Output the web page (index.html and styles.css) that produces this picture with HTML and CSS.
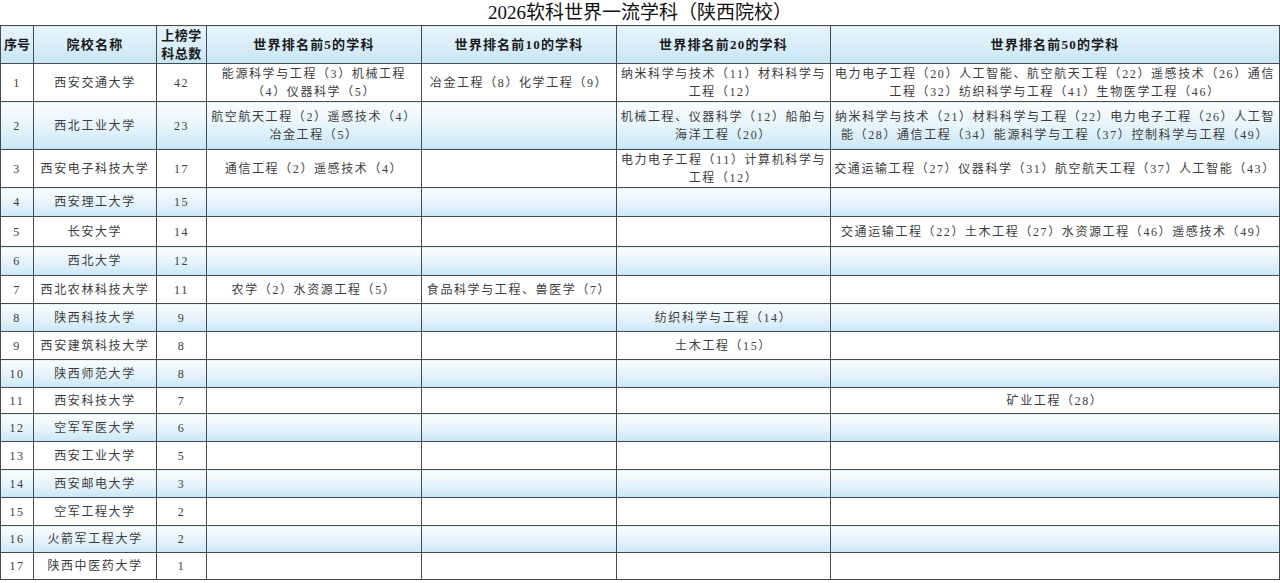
FILE: index.html
```html
<!DOCTYPE html>
<html lang="zh-CN">
<head>
<meta charset="utf-8">
<title>2026软科世界一流学科（陕西院校）</title>
<link rel="stylesheet" href="styles.css">
</head>
<body>
<div class="title">2026软科世界一流学科（陕西院校）</div>
<table class="rank">
  <colgroup>
    <col class="c-no"><col class="c-name"><col class="c-total"><col class="c-5"><col class="c-10"><col class="c-20"><col class="c-50">
  </colgroup>
  <thead>
    <tr class="h-head">
      <th class="th-no">序号</th>
      <th>院校名称</th>
      <th class="th-total">上榜学<br>科总数</th>
      <th>世界排名前5的学科</th>
      <th>世界排名前10的学科</th>
      <th>世界排名前20的学科</th>
      <th>世界排名前50的学科</th>
    </tr>
  </thead>
  <tbody>
    <tr class="h38">
      <td>1</td><td>西安交通大学</td><td>42</td>
      <td>能源科学与工程（3）机械工程<br>（4）仪器科学（5）</td>
      <td>冶金工程（8）化学工程（9）</td>
      <td>纳米科学与技术（11）材料科学与<br>工程（12）</td>
      <td>电力电子工程（20）人工智能、航空航天工程（22）遥感技术（26）通信<br>工程（32）纺织科学与工程（41）生物医学工程（46）</td>
    </tr>
    <tr class="alt h48">
      <td>2</td><td>西北工业大学</td><td>23</td>
      <td>航空航天工程（2）遥感技术（4）<br>冶金工程（5）</td>
      <td></td>
      <td>机械工程、仪器科学（12）船舶与<br>海洋工程（20）</td>
      <td>纳米科学与技术（21）材料科学与工程（22）电力电子工程（26）人工智<br>能（28）通信工程（34）能源科学与工程（37）控制科学与工程（49）</td>
    </tr>
    <tr class="h38">
      <td>3</td><td>西安电子科技大学</td><td>17</td>
      <td>通信工程（2）遥感技术（4）</td>
      <td></td>
      <td>电力电子工程（11）计算机科学与<br>工程（12）</td>
      <td>交通运输工程（27）仪器科学（31）航空航天工程（37）人工智能（43）</td>
    </tr>
    <tr class="alt h29">
      <td>4</td><td>西安理工大学</td><td>15</td><td></td><td></td><td></td><td></td>
    </tr>
    <tr class="h30">
      <td>5</td><td>长安大学</td><td>14</td><td></td><td></td><td></td>
      <td>交通运输工程（22）土木工程（27）水资源工程（46）遥感技术（49）</td>
    </tr>
    <tr class="alt h29">
      <td>6</td><td>西北大学</td><td>12</td><td></td><td></td><td></td><td></td>
    </tr>
    <tr class="h28">
      <td>7</td><td>西北农林科技大学</td><td>11</td>
      <td>农学（2）水资源工程（5）</td>
      <td>食品科学与工程、兽医学（7）</td>
      <td></td><td></td>
    </tr>
    <tr class="alt h28">
      <td>8</td><td>陕西科技大学</td><td>9</td><td></td><td></td>
      <td>纺织科学与工程（14）</td><td></td>
    </tr>
    <tr class="h28">
      <td>9</td><td>西安建筑科技大学</td><td>8</td><td></td><td></td>
      <td>土木工程（15）</td><td></td>
    </tr>
    <tr class="alt h28">
      <td>10</td><td>陕西师范大学</td><td>8</td><td></td><td></td><td></td><td></td>
    </tr>
    <tr class="h26">
      <td>11</td><td>西安科技大学</td><td>7</td><td></td><td></td><td></td>
      <td>矿业工程（28）</td>
    </tr>
    <tr class="alt h28">
      <td>12</td><td>空军军医大学</td><td>6</td><td></td><td></td><td></td><td></td>
    </tr>
    <tr class="h28">
      <td>13</td><td>西安工业大学</td><td>5</td><td></td><td></td><td></td><td></td>
    </tr>
    <tr class="alt h28">
      <td>14</td><td>西安邮电大学</td><td>3</td><td></td><td></td><td></td><td></td>
    </tr>
    <tr class="h28">
      <td>15</td><td>空军工程大学</td><td>2</td><td></td><td></td><td></td><td></td>
    </tr>
    <tr class="alt h27">
      <td>16</td><td>火箭军工程大学</td><td>2</td><td></td><td></td><td></td><td></td>
    </tr>
    <tr class="h27">
      <td>17</td><td>陕西中医药大学</td><td>1</td><td></td><td></td><td></td><td></td>
    </tr>
  </tbody>
</table>
</body>
</html>
```
FILE: styles.css
```css
html, body {
  margin: 0;
  padding: 0;
  background: #ffffff;
}

body {
  font-family: "Liberation Serif", "Noto Sans CJK SC", serif;
  color: #3a3a3a;
}

.title {
  height: 25px;
  line-height: 25px;
  text-align: center;
  font-size: 19px;
  color: #111111;
  letter-spacing: 0;
}

.rank {
  border-collapse: collapse;
  table-layout: fixed;
  width: 1279px;
}

.c-no { width: 33px; }
.c-name { width: 123px; }
.c-total { width: 50px; }
.c-5 { width: 215px; }
.c-10 { width: 195px; }
.c-20 { width: 214px; }
.c-50 { width: 449px; }

.rank th,
.rank td {
  border: 1px solid #4a4a4a;
  padding: 0 2px;
  text-align: center;
  vertical-align: middle;
  white-space: nowrap;
  overflow: visible;
}

.rank th {
  font-size: 13px;
  font-weight: bold;
  color: #1a1a1a;
  letter-spacing: 1.2px;
  line-height: 18px;
  background: linear-gradient(to bottom, #e8f5fc 0%, #d9eef9 50%, #c6e5f6 100%);
}

.rank .th-no {
  letter-spacing: 0;
  padding: 0;
}

.rank .th-total {
  letter-spacing: 0.5px;
  padding: 0;
}

.rank td {
  font-size: 12px;
  letter-spacing: 1.6px;
  line-height: 18px;
  color: #3c3c3c;
}

.rank tr.alt td {
  background: linear-gradient(to bottom, #fafdfe 0%, #e6f4fc 50%, #c9e7f8 100%);
}

.h-head { height: 38px; }
.h48 { height: 48px; }
.h38 { height: 38px; }
.h30 { height: 30px; }
.h29 { height: 29px; }
.h28 { height: 28px; }
.h27 { height: 27px; }
.h26 { height: 26px; }
```
